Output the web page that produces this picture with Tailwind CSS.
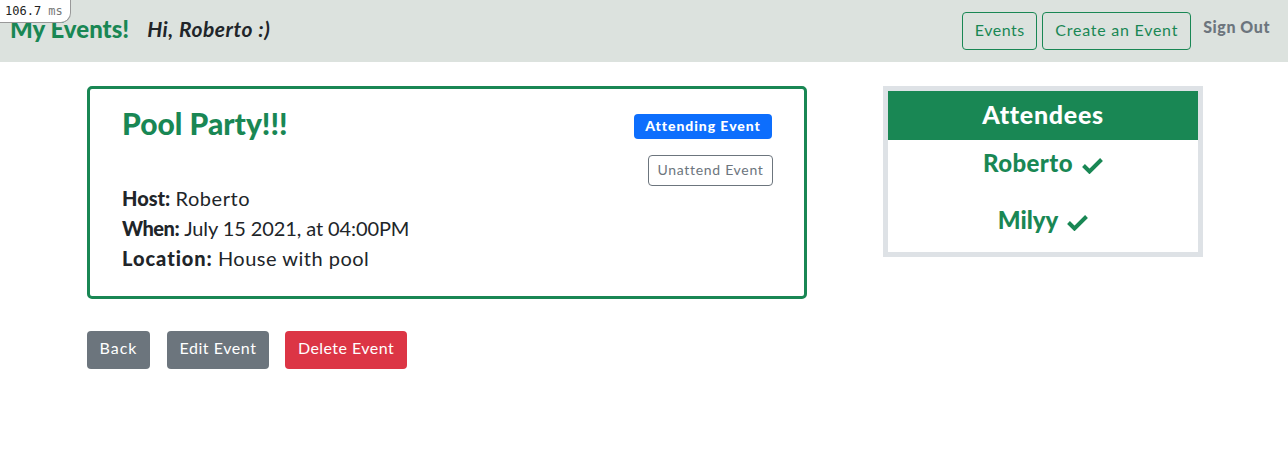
<!DOCTYPE html>
<html lang="en">
<head>
  <meta charset="UTF-8">
  <title>My Events</title>
  <script src="https://cdn.jsdelivr.net/npm/@tailwindcss/browser@4"></script>
</head>
<body class="bg-white font-['Lato',sans-serif] text-[#212529] relative">

  <!-- Render timer -->
  <div class="absolute top-0 left-0 w-[71px] h-[23px] bg-white border-r border-b border-[#999] rounded-br-[10px] flex items-center pl-[5px] font-['DejaVu_Sans_Mono',monospace] text-[12px] leading-none whitespace-pre text-[#222]">106.7 <span class="text-[#777]">ms</span></div>

  <!-- Nav -->
  <nav class="h-[62px] bg-[#dce2de] flex items-center pl-[10px] pr-[18px]">
    <h1 class="text-[24px] font-black text-[#198754] leading-none mb-[4px]">My Events!</h1>
    <p class="ml-[18px] text-[21px] tracking-[0.55px] italic font-bold text-[#212529] leading-none mb-[5px]">Hi, Roberto :)</p>
    <div class="ml-auto flex items-center gap-[5px]">
      <a class="h-[38px] w-[75px] pb-[3px] flex items-center justify-center border border-[#198754] rounded text-[16px] tracking-[0.5px] text-[#198754]">Events</a>
      <a class="h-[38px] w-[149px] pb-[3px] flex items-center justify-center border border-[#198754] rounded text-[16px] tracking-[0.75px] text-[#198754]">Create an Event</a>
    </div>
    <a class="ml-[12px] mb-[8px] text-[16px] tracking-[0.55px] font-black text-[#6c757d]">Sign Out</a>
  </nav>

  <main class="flex items-start pl-[87px] pt-[24px]">
    <div class="w-[720px]">
      <!-- Event card -->
      <section class="h-[213px] border-[3px] border-[#198754] rounded-[5px] pl-[32px] pr-[31px] pt-[14px]">
        <div class="flex justify-between items-start">
          <h2 class="text-[30px] font-black text-[#198754] leading-[40px]">Pool Party!!!</h2>
          <span class="mt-[11px] mr-[1px] h-[25px] w-[138px] pb-[3px] flex items-center justify-center bg-[#0d6efd] rounded text-white text-[14px] tracking-[0.95px] font-black">Attending Event</span>
        </div>
        <div class="flex justify-end mt-[12px]">
          <button class="h-[31px] w-[125px] pb-[2px] border border-[#6c757d] rounded text-[14px] tracking-[0.7px] text-[#6c757d]">Unattend Event</button>
        </div>
        <div class="-mt-[3px] text-[20px] leading-[30px]">
          <p class="h-[30px]"><b class="font-black">Host:</b> <span class="tracking-[0.55px]">Roberto</span></p>
          <p class="h-[30px]"><b class="font-black tracking-[-0.5px]">When:</b> <span class="tracking-[-0.1px]">July 15 2021, at 04:00PM</span></p>
          <p class="h-[30px]"><b class="font-black tracking-[0.95px]">Location:</b> <span class="tracking-[0.5px]">House with pool</span></p>
        </div>
      </section>

      <!-- Actions -->
      <div class="flex mt-[32px]">
        <a class="h-[38px] w-[63px] pb-[4px] flex items-center justify-center bg-[#6c757d] rounded text-white text-[16px] tracking-[1px]">Back</a>
        <a class="ml-[17px] h-[38px] w-[102px] pb-[4px] flex items-center justify-center bg-[#6c757d] rounded text-white text-[16px] tracking-[0.55px]">Edit Event</a>
        <a class="ml-[16px] h-[38px] w-[122px] pb-[4px] flex items-center justify-center bg-[#dc3545] rounded text-white text-[16px] tracking-[0.45px]">Delete Event</a>
      </div>
    </div>

    <!-- Attendees -->
    <aside class="ml-[76px] w-[320px] h-[171px] border-[5px] border-[#dee2e6]">
      <h3 class="h-[49px] pb-[2px] bg-[#198754] flex items-center justify-center text-white text-[25px] tracking-[0.7px] font-black">Attendees</h3>
      <ul class="text-[#198754] text-[24px] font-black">
        <li class="h-[50px] pb-[4px] flex items-center justify-center gap-[9px]"><span class="tracking-[0.4px]">Roberto</span>
          <svg class="w-[21px] h-[17px] mt-[5px]" viewBox="0 0 21 17" fill="none" stroke="currentColor" stroke-width="4"><path d="M1.5 8.5 7.5 14.5 19.5 2.5"/></svg>
        </li>
        <li class="h-[63px] pb-[4px] flex items-center justify-center gap-[9px]">Milyy
          <svg class="w-[21px] h-[17px] mt-[5px]" viewBox="0 0 21 17" fill="none" stroke="currentColor" stroke-width="4"><path d="M1.5 8.5 7.5 14.5 19.5 2.5"/></svg>
        </li>
      </ul>
    </aside>
  </main>
</body>
</html>
